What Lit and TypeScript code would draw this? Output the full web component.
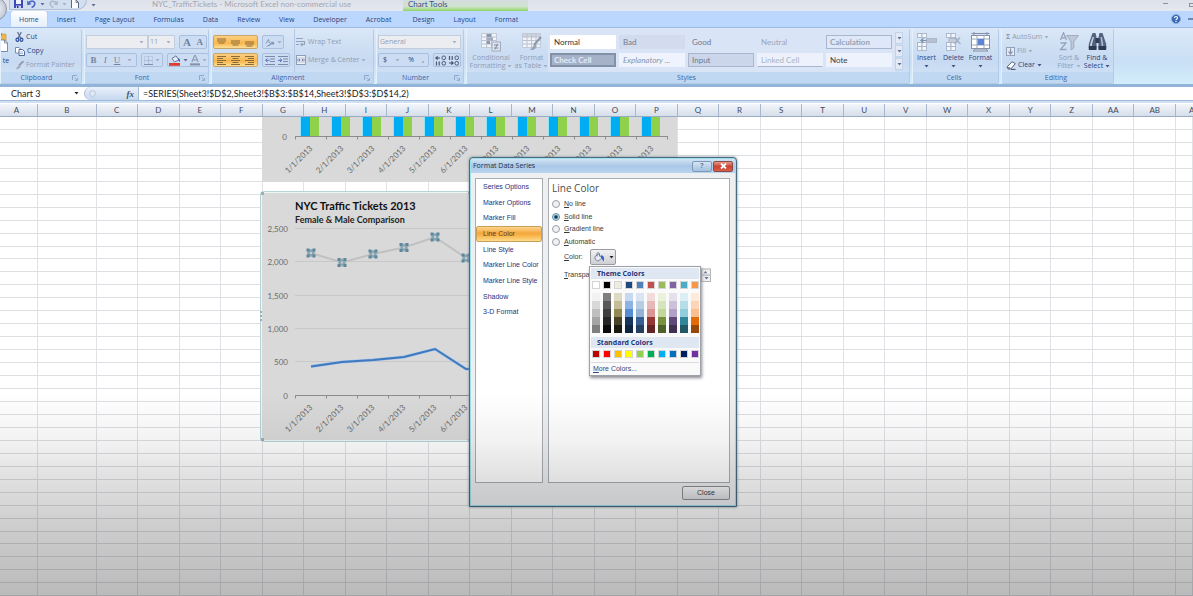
import { LitElement, html, css, svg, nothing } from "lit";
import { customElement, property, state } from "lit/decorators.js";
import { classMap } from "lit/directives/class-map.js";

const TABS = ["Home", "Insert", "Page Layout", "Formulas", "Data", "Review", "View", "Developer", "Acrobat"];
const CHART_TABS = ["Design", "Layout", "Format"];
const COLUMNS = [..."ABCDEFGHIJKLMNOPQRSTUVWXYZ", "AA", "AB", "AC"];
const ROW_COUNT = 37;
const MONTHS = Array.from({ length: 12 }, (_, i) => `${i + 1}/1/2013`);
const SECTIONS = ["Series Options", "Marker Options", "Marker Fill", "Line Color", "Line Style",
  "Marker Line Color", "Marker Line Style", "Shadow", "3-D Format"];
const THEME = ["#ffffff", "#000000", "#eeece1", "#1f497d", "#4f81bd", "#c0504d", "#9bbb59", "#8064a2", "#4bacc6", "#f79646"];
const SHADES = [
  ["#f2f2f2", "#d8d8d8", "#bfbfbf", "#a5a5a5", "#7f7f7f"],
  ["#7f7f7f", "#595959", "#3f3f3f", "#262626", "#0c0c0c"],
  ["#ddd9c3", "#c4bd97", "#938953", "#494429", "#1d1b10"],
  ["#c6d9f0", "#8db3e2", "#548dd4", "#17365d", "#0f243e"],
  ["#dbe5f1", "#b8cce4", "#95b3d7", "#366092", "#244061"],
  ["#f2dcdb", "#e5b9b7", "#d99694", "#953734", "#632423"],
  ["#ebf1dd", "#d7e3bc", "#c3d69b", "#76923c", "#4f6128"],
  ["#e5e0ec", "#ccc1d9", "#b2a2c7", "#5f497a", "#3f3151"],
  ["#dbeef3", "#b7dde8", "#92cddc", "#31859b", "#205867"],
  ["#fdeada", "#fbd5b5", "#fac08f", "#e36c09", "#974806"],
];
const STANDARD = ["#c00000", "#ff0000", "#ffc000", "#ffff00", "#92d050", "#00b050", "#00b0f0", "#0070c0", "#002060", "#7030a0"];

const icon = (w: number, h: number, body: unknown) =>
  html`<svg width=${w} height=${h} viewBox="0 0 ${w} ${h}" aria-hidden="true">${body}</svg>`;
const caret = (color = "#5b6f95") => icon(5, 3, svg`<path d="M0.5 0H4.5L2.5 2.6Z" fill=${color} />`);

const ICONS = {
  save: icon(9, 9, svg`<path d="M0 0H9V9H1.2L0 7.8Z" fill="#3b48b5"/><rect x="2" y="0" width="5" height="4" fill="#eef2ff"/><rect x="2" y="5.6" width="5" height="3.4" fill="#c9cff0"/><rect x="3" y="6" width="1.4" height="3" fill="#28308a"/>`),
  undo: icon(9, 9, svg`<path d="M1 3.6C4-.4 8.6 1 7.6 4.6C7.2 6.200 6 7 4.600 7.600" fill="none" stroke="#4c68c4" stroke-width="1.700"/><path d="M0 .6L.4 5.200L4.600 4.200Z" fill="#4c68c4"/>`),
  redo: icon(9, 9, svg`<path d="M8 3.6C5-.4.4 1 1.400 4.600C1.800 6.200 3 7 4.400 7.600" fill="none" stroke="#aab6cf" stroke-width="1.500"/><path d="M9 .6L8.600 5.200L4.400 4.200Z" fill="#aab6cf"/>`),
  page: icon(8, 9, svg`<path d="M.5 0V8.500H7.500V2.500L5 0" fill="#fff" stroke="#5f6a80"/><path d="M5 0V2.500H7.500" fill="none" stroke="#5f6a80" stroke-width=".8"/>`),
  paste: icon(8, 20, svg`<rect x="-6" y="1" width="11" height="15" rx="1" fill="#f2b548" stroke="#c98a2b" stroke-width=".6"/><rect x="-4" y="0" width="5" height="3" fill="#8c93a3"/><path d="M-3 7H3.500L6.500 10V18.500H-3Z" fill="#fff" stroke="#5d7299" stroke-width=".8"/><path d="M3.500 7V10H6.500" fill="none" stroke="#5d7299" stroke-width=".7"/>`),
  cut: icon(9, 10, svg`<path d="M2.600 0L5.800 6.500M6.300 0L3 6.500" stroke="#5f6c86" stroke-width="1.200"/><ellipse cx="2.400" cy="7.800" rx="1.400" ry="1.600" fill="none" stroke="#2f4c9c" stroke-width="1.200"/><ellipse cx="6.500" cy="7.800" rx="1.400" ry="1.600" fill="none" stroke="#2f4c9c" stroke-width="1.200"/>`),
  copy: icon(10, 9, svg`<path d="M.5.5H4L5.500 2V6H.5Z" fill="#fff" stroke="#6a80ad" stroke-width=".9"/><path d="M4 2.500H7.500L9.500 4.500V8.500H4Z" fill="#fff" stroke="#3b5692" stroke-width=".9"/><path d="M5 5H8M5 6.600H8.300" stroke="#7d95c6" stroke-width=".7"/>`),
  brush: icon(9, 9, svg`<path d="M8.500 0L4 4.500" stroke="#8e99ad" stroke-width="1.800"/><path d="M4.600 3.800L6 5.300C4.500 8 2.500 8.500.5 8.600C1.800 7.500 2 5 4.600 3.800Z" fill="#a6afbf"/>`),
  launcher: icon(6, 6, svg`<path d="M.5 5V.5H5" fill="none" stroke="#8fa8cc"/><path d="M2.500 2.500L5 5M5.500 2.800V5.500H2.800" fill="none" stroke="#8fa8cc" stroke-width=".9"/>`),
  borders: icon(9, 9, svg`<rect x=".5" y=".5" width="8" height="8" fill="none" stroke="#9fb0cb" stroke-width=".8" stroke-dasharray="1 1"/><path d="M4.500.5V8.500M.5 4.500H8.500" stroke="#9fb0cb" stroke-width=".7"/><path d="M0 8.500H9" stroke="#7f90ac"/>`),
  fill: icon(12, 11, svg`<path d="M3 3.500L7 .8L10 5L5.500 7Z" fill="#e5ecf8" stroke="#5b6e94" stroke-width=".9"/><path d="M9.400 3C11.200 4 11.300 6 10.600 7C9.800 6.500 10 5 9 4.200Z" fill="#3156b0"/><rect x="0" y="8" width="11" height="2.800" fill="#e23a2e"/>`),
  fontColor: icon(10, 11, svg`<path d="M1.800 7L4.600.6H5.400L8.200 7M2.900 4.800H7" fill="none" stroke="#8f9db8" stroke-width="1.200"/><rect x="0" y="8.300" width="10" height="2.200" fill="#8a94a8"/>`),
  orient: icon(10, 9, svg`<path d="M1 5.500L3.500 1.500L4.500 5M4.300 7.500L7 3.500M1.500 8.500L8.500 5M6.500 4.600L9 4.700L7.800 7" fill="none" stroke="#7b8cab" stroke-width=".9"/>`),
  wrap: icon(10, 10, svg`<path d="M0 1.500H7M0 4.500H8.500V7.500H5M0 7.500H3M6.500 5.800L4.800 7.500L6.500 9.200" fill="none" stroke="#94a3bd" stroke-width="1.100"/>`),
  merge: icon(10, 10, svg`<rect x=".5" y=".5" width="9" height="9" fill="#edf1f8" stroke="#8f9db8"/><path d="M.5 3H9.500M.5 7H9.500" stroke="#a9b6cd" stroke-width=".7"/><path d="M1 5H4M9 5H6M2.800 3.800L4.200 5L2.800 6.200M7.200 3.800L5.800 5L7.200 6.200" fill="none" stroke="#5e6f90" stroke-width=".8"/>`),
  conditional: icon(20, 20, svg`<rect x=".5" y="1.500" width="15" height="14" fill="#f1f3f8" stroke="#c3cad8"/><path d="M.5 5H15.500M.5 8.500H15.500M.5 12H15.500M5.500 1.500V15.500M10.500 1.500V15.500" stroke="#b9c2d3"/><rect x="6" y="2" width="4" height="3" fill="#8d97aa"/><rect x="6" y="5.500" width="6" height="3" fill="#a1aabb"/><rect x="6" y="9" width="3" height="3" fill="#8d97aa"/><rect x="11" y="10" width="8.500" height="9" fill="#dfe4ec" stroke="#9ba6ba" stroke-width=".9"/><path d="M13 13H17.500M13 16H17.500M16.600 11.800L14 17.300" stroke="#77839a" stroke-width=".9"/>`),
  formatTable: icon(20, 20, svg`<rect x=".5" y="1.500" width="18" height="14" fill="#f1f3f8" stroke="#c3cad8"/><rect x="1" y="2" width="17" height="3" fill="#cdd4e0"/><path d="M.5 5H18.500M.5 8.500H18.500M.5 12H18.500M5 1.500V15.500M9.500 1.500V15.500M14 1.500V15.500" stroke="#b9c2d3"/><path d="M19 5L12 13" stroke="#8b96ab" stroke-width="2"/><path d="M13.300 12.500C11 12.500 11 16 8 17.500C11 19 14.500 17 14.500 13.700Z" fill="#9aa5b9"/>`),
  insert: icon(20, 18, svg`<g fill="#f2f5fa" stroke="#a8b4c8" stroke-width=".9"><rect x=".5" y=".5" width="4.500" height="4"/><rect x="5" y=".5" width="4.500" height="4"/><rect x="9.500" y="5.500" width="10" height="4" fill="#b6c0d1"/><rect x=".5" y="9.500" width="4.500" height="4"/><rect x="5" y="9.500" width="4.500" height="4"/><rect x=".5" y="13.500" width="4.500" height="4"/><rect x="5" y="13.500" width="4.500" height="4"/></g><path d="M9.500 7.500H4M6.500 5.200L4 7.500L6.500 9.800" fill="none" stroke="#7f8ea9" stroke-width="1.200"/>`),
  remove: icon(18, 18, svg`<g fill="#f2f5fa" stroke="#a8b4c8" stroke-width=".9"><rect x="1.500" y=".5" width="4.500" height="4"/><rect x="6" y=".5" width="4.500" height="4"/><rect x="4" y="5.500" width="8" height="4" fill="#c4ccd9"/><rect x="1.500" y="9.500" width="4.500" height="4"/><rect x="6" y="9.500" width="4.500" height="4"/><rect x="1.500" y="13.500" width="4.500" height="4"/><rect x="6" y="13.500" width="4.500" height="4"/></g><path d="M9.500 4.500L15.500 11M15 4.500L9.500 11" stroke="#a3b0c6" stroke-width="1.400"/>`),
  format: icon(21, 20, svg`<rect x="1.500" y="3.500" width="18" height="13" fill="#fff" stroke="#8492ac"/><path d="M1.500 7H19.500M1.500 13H19.500M7 3.500V16.500M14 3.500V16.500" stroke="#9aa8c0"/><rect x="7.500" y="7" width="6.500" height="6" fill="#5b84d6"/><path d="M1.500 1.500H19.500M4 0V3M17 0V3M3 19H18L16 17H5Z" stroke="#8590a6" fill="#d7dde9"/>`),
  fillDown: icon(9, 9, svg`<rect x=".5" y=".5" width="8" height="8" fill="#e4e9f2" stroke="#93a0b7"/><path d="M4.500 1.500V6M2.500 4.500L4.500 7L6.500 4.500" fill="none" stroke="#8290aa" stroke-width="1.200"/>`),
  eraser: icon(10, 9, svg`<path d="M1 6L6 .8L9.300 2.600L4.800 8H2Z" fill="#fff" stroke="#4a5570" stroke-width=".9"/><path d="M1 6L4 6.300L4.800 8H2Z" fill="#707b92"/><path d="M5 8.400H9.500" stroke="#3f4860"/>`),
  sort: icon(20, 20, svg`<path d="M1.500 8L4.500.8L7.500 8M2.600 5.800H6.500M1.500 11H7L1.500 17.500H7.500" fill="none" stroke="#97a3ba" stroke-width="1.300"/><path d="M7.500 3.500H19.500L14.800 9.500V16L12 18V9.500Z" fill="#bfc8d7" stroke="#95a1b7" stroke-width=".8"/>`),
  find: icon(19, 19, svg`<path d="M4.500 1H7.500L8.500 5V16.500H.8V12Z" fill="#53627f"/><path d="M14.500 1H11.500L10.500 5V16.500H18.200V12Z" fill="#53627f"/><rect x="7.500" y="6" width="4" height="5" fill="#323d58"/><path d="M4.600 5L2.200 12V15H4V12L6 5Z" fill="#c8d3e8"/><path d="M12.500 5L13.500 12V15H15.200V12L14 5Z" fill="#aebbd5"/><path d="M.8 14H8.500V18H.8ZM10.500 14H18.200V18H10.500Z" fill="#2f3953"/>`),
  help: icon(10, 10, svg`<circle cx="5" cy="5" r="4.500" fill="#3767b5" stroke="#8ba9d8"/><path d="M3.500 4C3.500 2 6.700 2 6.500 4C6.400 5 5 5 5 6.200M5 7V8" fill="none" stroke="#fff" stroke-width="1.200"/>`),
  bucket: icon(12, 11, svg`<path d="M2 4.500L5.500 2L9 6L5 9.200L2 7Z" fill="#e8edf6" stroke="#6b7c9c" stroke-width=".9"/><path d="M4 4.500V1.500C4 .3 6.500.3 6.500 2V4.500" fill="none" stroke="#6b7c9c" stroke-width=".9"/><path d="M8 3.200C10.800 3.500 11.600 5.500 10.600 9.500C9.500 9 9.300 6.500 7.800 5Z" fill="#3c5fc0"/>`),
};

const alignIcon = (lengths: number[], top: number) =>
  icon(9, 9, lengths.map((n, i) => svg`<path d="M${(9 - n) / 2} ${top + i * 2}H${(9 + n) / 2}" stroke="#8b6b38" stroke-width="1"/>`));
const rowsIcon = (shift: number) =>
  icon(9, 9, [9, 6, 9, 6, 9].map((n, i) => svg`<path d="M${n === 9 ? 0 : shift} ${0.5 + i * 2}h${n}" stroke="#8b6b38" stroke-width="1"/>`));
const indentIcon = (dir: number) => icon(10, 9, svg`
  <path d="M0 .5H10M5 3H10M5 5.500H10M0 8.500H10" stroke="#7b8bab"/>
  <path d=${dir < 0 ? "M4.500 4.300H.8M2.500 2.500L.6 4.300L2.500 6.100" : "M0 4.300H3.700M2 2.500L3.900 4.300L2 6.100"} fill="none" stroke="#5672b4" />`);
const decimalIcon = (dir: number) => icon(12, 11, svg`
  <path d=${dir < 0 ? "M5 3H1M2.600 1.300L.8 3L2.600 4.700" : "M1 8H5M3.400 6.300L5.200 8L3.400 9.700"} fill="none" stroke="#3c4c74" stroke-width="1.100"/>
  <rect x="7" y="1" width="3.500" height="3.600" rx="1.500" fill="none" stroke="#4a5875"/>
  <rect x="7" y="6.500" width="3.500" height="3.600" rx="1.500" fill="none" stroke="#4a5875"/>
  <path d=${dir < 0 ? "M1.500 6.500V10.500M4.200 6.500V10.500" : "M1.500 1V5M4.200 1V5"} stroke="#4a5875" stroke-width="1.200"/>`);

@customElement("ribbon-group")
class RibbonGroup extends LitElement {
  @property() label = "";
  @property({ type: Boolean }) launcher = false;
  static styles = css`
    :host { display: flex; flex-direction: column; box-sizing: border-box; border: 1px solid #b3cbe8; border-left-color: #e6f0fc; border-top: 0;
      border-radius: 2px; background: linear-gradient(#dae7f7, #cfe0f4 30%, #c7daf1 60%, #d3e5f8); overflow: hidden; flex: none; }
    .content { display: flex; flex: 1; min-height: 0; }
    .label { display: flex; align-items: center; height: 11px; flex: none; background: #c0d8f1; color: #4066ab; line-height: 10px; padding-right: 3px; }
    .name { flex: 1; text-align: center; }
    svg { display: block; }
  `;
  render() {
    return html`<div class="content"><slot></slot></div>
      <div class="label"><span class="name">${this.label}</span>${this.launcher ? ICONS.launcher : nothing}</div>`;
  }
}

@customElement("excel-ribbon")
class ExcelRibbon extends LitElement {
  static styles = css`
    :host { display: block; flex: none; }
    svg { display: block; flex: none; }
    button, select { font: inherit; color: inherit; border: 0; background: none; padding: 0; margin: 0; white-space: nowrap; }
    select { appearance: none; }
    .title { display: flex; height: 11px; background: linear-gradient(#dde1ea, #e6e8ef); color: #a3a7b2; font-family: Lato, sans-serif; font-size: 8px; line-height: 8px; }
    .quick { display: flex; align-items: flex-start; gap: 4px; width: 78px; box-sizing: border-box; padding-left: 4px; margin-left: 9px; height: 10px; background: #d2dff0;
      border: 1px solid #aebfd8; border-top: 0; border-radius: 0 0 10px 0; }
    .quick button { height: 8px; overflow: hidden; flex: none; }
    .more { padding: 0 4px; display: flex; align-items: center; }
    .name { margin-left: 52px; width: 251px; white-space: nowrap; }
    .tools { width: 125px; box-sizing: border-box; padding-left: 5px; color: #34508f; background: linear-gradient(#d5dbe0, #cfe3cc 60%, #8fd564); }
    .window { margin-left: auto; display: flex; gap: 21px; padding-top: 3px; }
    .window span { width: 5px; height: 1px; background: #8c909b; }
    .window span + span { width: 4px; height: 4px; background: none; border: 1px solid #8c909b; border-right: 0; box-sizing: border-box; }
    .tabs { display: flex; gap: 1px; height: 16px; background: #bbd7fd; color: #2a4480; padding-left: 11px; position: relative; }
    .tabs button { padding: 1px 9px 0; line-height: 16px; height: 16px; }
    .tabs .active { background: linear-gradient(#fff, #e4eefb); border-radius: 3px 3px 0 0; box-shadow: 0 0 1px #7fa2d4; padding: 1px 8px 0; }
    .tabs .design { margin-left: 2px; }
    .right { margin-left: auto; display: flex; align-items: center; gap: 7px; }
    .dash { width: 5px; height: 2px; background: #6d86b4; }
    .orb { position: absolute; left: -17px; top: -14px; width: 22px; height: 22px; border-radius: 50%; border: 1px solid #8c97a8;
      background: radial-gradient(#f8f9fc, #c3cad8 70%, #e9edf4); }
    .body { display: flex; gap: 2px; height: 60px; box-sizing: border-box; padding: 1px 0 0; border-top: 1px solid #9dbbe2;
      border-bottom: 3px solid #91b4d8; background: linear-gradient(#dce9f8, #c9dff5 60%, #d2effb); color: #2a4480; }
    .off { color: #919cb2; }
    .clipboard { width: 82px; } .font { width: 125px; } .align { width: 163px; } .number { width: 88px; }
    .styles { width: 444px; } .cells { width: 87px; } .editing { width: 113px; }
    .paste { width: 10px; overflow: hidden; display: flex; flex-direction: column; padding-top: 4px; gap: 3px; }
    .list { display: flex; flex-direction: column; padding: 1px 0 0 4px; }
    .list button { display: flex; align-items: center; gap: 2px; height: 14px; }
    .rows { display: flex; flex-direction: column; gap: 4px; padding: 6px 0 0 1px; }
    .row { display: flex; gap: 4px; height: 14px; }
    .set { display: flex; align-items: center; justify-content: space-around; box-sizing: border-box; border: 1px solid #a9bfdf; border-radius: 2px; background: #ccdcf2; }
    .set button { display: flex; align-items: center; gap: 2px; }
    .box { display: flex; align-items: center; box-sizing: border-box; border: 1px solid #c2cede; background: #ebedf1; padding-right: 3px; }
    .box select { flex: 1; min-width: 0; padding-left: 1px; }
    .w20 { width: 22px; } .w26 { width: 27px; } .w28 { width: 28px; } .w42 { width: 42px; } .w50 { width: 51px; } .w62 { width: 62px; } .w82 { width: 83px; }
    .join { margin-left: -4px; }
    .big { font-size: 11px; font-family: "Liberation Serif", serif; font-weight: bold; color: #6f819f; line-height: 12px; }
    .small { font-size: 9px; }
    .serif { font-family: "Liberation Serif", serif; font-size: 9px; color: #75849f; }
    .orange { width: 45px; background: linear-gradient(#fbcf83, #f9b64c 60%, #fddf96); border-color: #c9a469; }
    .wide { display: flex; flex-direction: column; gap: 4px; padding: 6px 0 0 1px; margin-left: 4px; border-left: 1px solid #b3c8e4; }
    .wide button { display: flex; align-items: center; gap: 2px; height: 14px; }
    .tall { display: flex; flex-direction: column; align-items: center; padding-top: 2px; line-height: 8px; gap: 2px; height: 43px; }
    .line { display: flex; align-items: center; gap: 2px; height: 8px; justify-content: center; }
    .caption { display: flex; flex-direction: column; align-items: center; }
    .tall .pic { height: 21px; display: flex; align-items: center; }
    .t1 { width: 48px; } .t2 { width: 33px; }
    .gallery { display: grid; grid-template-columns: repeat(5, 66px); grid-auto-rows: 14px; gap: 4px 3px; padding: 6px 3px 4px 2px; background: #dae4f7; }
    .gallery button { box-sizing: border-box; text-align: left; padding-left: 3px; font-family: Lato, sans-serif; font-size: 8px; border: 1px solid transparent; color: #707a8e; }
    .gallery .normal { background: #fff; color: #333; }
    .gallery .check { background: #a5b2c8; border: 2px solid #8391a8; color: #e6ecf7; font-weight: bold; line-height: 9px; padding-left: 2px; }
    .gallery .expl { background: #eef3fd; font-style: italic; color: #8d96a8; }
    .gallery .bad { background: #d3dcee; }
    .gallery .input { background: #cbd6ea; border-color: #a9b6cd; }
    .gallery .neutral { color: #9aa4b8; }
    .gallery .calc { border-color: #aab6cd; background: #dee8f8; color: #98a2b5; font-weight: bold; }
    .gallery .linked { background: #ecf1fb; border-bottom-color: #aab6cd; color: #aab3c4; }
    .gallery .note { background: #edf2fc; color: #3c3f48; }
    .scroll { display: grid; grid-template-rows: repeat(3, 12px); padding-top: 3px; gap: 1px; }
    .scroll button { width: 8px; background: #e3eaf5; border: 1px solid #c3d2e8; box-sizing: border-box; display: flex; align-items: center; justify-content: center; }
    .cells .tall { width: 27px; }
    .editing .tall { width: 28px; }
    .editing .list { width: 49px; }
  `;

  private tall(pic: unknown, lines: string[], cls: string, arrow: "last" | "below", off = false) {
    return html`<button class="tall ${cls} ${off ? "off" : ""}"><span class="pic">${pic}</span><span class="caption">
      ${lines.map((t, i) => html`<span class="line">${t}${arrow === "last" && i === lines.length - 1 ? caret(off ? "#a4afc4" : "#3d5487") : nothing}</span>`)}
      ${arrow === "below" ? html`<span class="line">${caret("#3d5487")}</span>` : nothing}</span></button>`;
  }

  render() {
    const styles: [string, string][] = [["Normal", "normal"], ["Bad", "bad"], ["Good", "good"], ["Neutral", "neutral"], ["Calculation", "calc"],
      ["Check Cell", "check"], ["Explanatory ...", "expl"], ["Input", "input"], ["Linked Cell", "linked"], ["Note", "note"]];
    const faint = caret("#a4afc4");
    return html`
      <div class="title">
        <div class="quick">
          <button aria-label="Save">${ICONS.save}</button><button aria-label="Undo">${ICONS.undo}</button><button class="drop" aria-label="Undo list">${caret()}</button>
          <button aria-label="Redo">${ICONS.redo}</button><button class="drop" aria-label="Redo list">${faint}</button><button aria-label="New">${ICONS.page}</button>
        </div>
        <button class="more" aria-label="Customize">${caret()}</button>
        <span class="name">NYC_TrafficTickets - Microsoft Excel non-commercial use</span>
        <span class="tools">Chart Tools</span>
        <span class="window"><span></span><span></span></span>
      </div>
      <div class="tabs">
        <span class="orb"></span>
        ${TABS.map((t) => html`<button class=${classMap({ active: t === "Home" })}>${t}</button>`)}
        ${CHART_TABS.map((t) => html`<button class=${classMap({ design: t === "Design" })}>${t}</button>`)}
        <span class="right">${ICONS.help}<span class="dash"></span></span>
      </div>
      <div class="body">
        <ribbon-group class="clipboard" label="Clipboard" launcher>
          <button class="paste">${ICONS.paste}<span>te</span></button>
          <div class="list"><button>${ICONS.cut}Cut</button><button>${ICONS.copy}Copy</button><button class="off">${ICONS.brush}Format Painter</button></div>
        </ribbon-group>
        <ribbon-group class="font" label="Font" launcher>
          <div class="rows off">
            <div class="row">
              <div class="box w62"><select aria-label="Font name"><option></option></select>${faint}</div>
              <div class="box w26 join"><select aria-label="Font size"><option>11</option></select>${faint}</div>
              <div class="set w28"><button class="big">A</button><button class="big small">A</button></div>
            </div>
            <div class="row">
              <div class="set w50"><button class="serif"><b>B</b></button><button class="serif"><i>I</i></button><button class="serif"><u>U</u></button>${faint}</div>
              <div class="set w20"><button aria-label="Borders">${ICONS.borders}${faint}</button></div>
              <div class="set w42"><button aria-label="Fill color">${ICONS.fill}${caret()}</button><button aria-label="Font color">${ICONS.fontColor}${faint}</button></div>
            </div>
          </div>
        </ribbon-group>
        <ribbon-group class="align" label="Alignment" launcher>
          <div class="rows">
            <div class="row">
              <div class="set orange"><button aria-label="Top">${alignIcon([9, 9, 6], 1)}</button><button aria-label="Middle">${alignIcon([9, 9, 6], 3)}</button><button aria-label="Bottom">${alignIcon([9, 9, 6], 4)}</button></div>
              <div class="set w20"><button aria-label="Orientation">${ICONS.orient}${faint}</button></div>
            </div>
            <div class="row">
              <div class="set orange"><button aria-label="Left">${rowsIcon(0)}</button><button aria-label="Center">${rowsIcon(1.5)}</button><button aria-label="Right">${rowsIcon(3)}</button></div>
              <div class="set w28"><button aria-label="Outdent">${indentIcon(-1)}</button><button aria-label="Indent">${indentIcon(1)}</button></div>
            </div>
          </div>
          <div class="wide off"><button>${ICONS.wrap}Wrap Text</button><button>${ICONS.merge}Merge &amp; Center${faint}</button></div>
        </ribbon-group>
        <ribbon-group class="number" label="Number" launcher>
          <div class="rows">
            <div class="row off"><div class="box w82"><select aria-label="Number format"><option>General</option></select>${faint}</div></div>
            <div class="row">
              <div class="set w50"><button>$</button>${faint}<button>%</button><button>,</button></div>
              <div class="set w28"><button aria-label="Increase decimal">${decimalIcon(-1)}</button><button aria-label="Decrease decimal">${decimalIcon(1)}</button></div>
            </div>
          </div>
        </ribbon-group>
        <ribbon-group class="styles" label="Styles">
          ${this.tall(ICONS.conditional, ["Conditional", "Formatting"], "t1", "last", true)}
          ${this.tall(ICONS.formatTable, ["Format", "as Table"], "t2", "last", true)}
          <div class="gallery">${styles.map(([t, c]) => html`<button class=${c}>${t}</button>`)}</div>
          <div class="scroll"><button aria-label="Up">${caret()}</button><button aria-label="Down">${caret()}</button><button aria-label="More">${caret()}</button></div>
        </ribbon-group>
        <ribbon-group class="cells" label="Cells">
          ${this.tall(ICONS.insert, ["Insert"], "", "below")}${this.tall(ICONS.remove, ["Delete"], "", "below")}${this.tall(ICONS.format, ["Format"], "", "below")}
        </ribbon-group>
        <ribbon-group class="editing" label="Editing">
          <div class="list"><button class="off"><b>Σ</b> AutoSum${faint}</button><button class="off">${ICONS.fillDown}Fill${faint}</button><button>${ICONS.eraser}Clear${caret("#3d5487")}</button></div>
          ${this.tall(ICONS.sort, ["Sort &", "Filter"], "", "last", true)}${this.tall(ICONS.find, ["Find &", "Select"], "", "last")}
        </ribbon-group>
      </div>`;
  }
}

@customElement("ticket-charts")
class TicketCharts extends LitElement {
  static styles = css`
    :host { display: block; position: absolute; left: 260px; top: 0; }
    svg { display: block; font-family: Lato, sans-serif; font-size: 8px; fill: #6a6a6a; }
    .title { font-size: 11px; font-weight: bold; fill: #111; }
    .sub { font-size: 9px; font-weight: bold; fill: #222; }
  `;
  private dates(y: number) {
    return MONTHS.map((m, i) => svg`<text text-anchor="end" transform="translate(${53 + i * 31} ${y}) rotate(-45)">${m}</text>`);
  }
  private axis(y: number) {
    const ticks = Array.from({ length: 13 }, (_, i) => `M${35.5 + i * 31} ${y}v3`).join("");
    return svg`<path d="M35 ${y}H408${ticks}" stroke="#8c8c8c" fill="none" />`;
  }
  render() {
    const male = [137, 146.5, 138, 131.5, 121, 142, 146, 140, 138, 142, 146, 148];
    const female = [250.5, 246, 244, 241, 233, 253, 253, 250, 248, 250, 252, 254];
    const line = (v: number[]) => v.map((y, i) => `${51 + i * 31},${y}`).join(" ");
    return html`<svg width="418" height="326" viewBox="0 1 418 326" role="img" aria-label="NYC traffic ticket charts">
      <rect x="2" y="0" width="415" height="66" fill="#d9d9d9" />
      ${MONTHS.map((_, i) => svg`<rect x=${40 + i * 31} y="0" width="1" height="20" fill="#8fe3f6"/><rect x=${41 + i * 31} y="0" width="9" height="20" fill="#00adf2"/>
        <rect x=${50 + i * 31} y="0" width="9" height="20" fill="#8fd14b"/>`)}
      <text x="27" y="24" text-anchor="end">0</text>
      ${this.axis(20.5)} ${this.dates(33)}
      <rect x=".5" y="75.500" width="417" height="250" rx="3" fill="#eef5f6" stroke="#b4d4d8" />
      <rect x="2" y="77" width="414" height="247" rx="4" fill="#d9d9d9" />
      <g fill="#9ab0b5"><path d="M1 76h3v3h-3zM1 322h3v3h-3zM208 76h4v2h-4zM208 323h4v2h-4zM0 195h2v2h-2zM0 199h2v2h-2zM0 203h2v2h-2z" /></g>
      <text class="title" x="35" y="94">NYC Traffic Tickets 2013</text>
      <text class="sub" x="35" y="107">Female &amp; Male Comparison</text>
      ${["2,500", "2,000", "1,500", "1,000", "500", "0"].map((t, i) => svg`<text x="28" y=${116 + Math.round(i * 33.3)} text-anchor="end">${t}</text>
        ${i < 5 ? svg`<path d="M35 ${112.5 + Math.round(i * 33.3)}H408" stroke="#c8c8c8"/>` : nothing}`)}
      ${this.axis(279.5)} ${this.dates(292)}
      <polyline points=${line(male)} fill="none" stroke="#c0c0c0" stroke-width="2" />
      ${male.map((y, i) => svg`<g transform="translate(${51 + i * 31} ${y})"><rect x="-3.500" y="-3.500" width="7" height="7" fill="#8aa5b3" stroke="#9db6c2"/>
        <path d="M-4.500-4.500h3v3h-3zM1.500-4.500h3v3h-3zM-4.500 1.500h3v3h-3zM1.500 1.500h3v3h-3z" fill="#5f8799"/><path d="M-1-1h2v2h-2z" fill="#c5ced2"/></g>`)}
      <polyline points=${line(female)} fill="none" stroke="#9cc3f0" stroke-width="3" />
      <polyline points=${line(female)} fill="none" stroke="#4179bd" stroke-width="2" />
    </svg>`;
  }
}

@customElement("format-dialog")
class FormatDialog extends LitElement {
  @state() private fill = "Solid line";
  static styles = css`
    :host { display: flex; flex-direction: column; position: absolute; left: 469px; top: 157px; width: 268px; height: 350px; box-sizing: border-box;
      border: 1px solid #476b80; border-radius: 4px 4px 0 0; background: #eeeff1; box-shadow: inset 0 0 0 1px #9fe0ee, 0 0 3px #7f8890; padding: 1px; color: #3a3a3a;
      font-family: "Liberation Sans", sans-serif; }
    button, input { font: inherit; color: inherit; margin: 0; }
    svg { display: block; flex: none; }
    .bar { display: flex; align-items: center; height: 14px; flex: none; padding: 0 1px 0 2px; background: linear-gradient(#d2e3f3, #a9c8e6 50%, #b9d4ee); color: #22304a; border-radius: 3px 3px 0 0; font-family: "Open Sans", sans-serif; }
    .bar h1 { margin: 0; font: inherit; flex: 1; }
    .bar button { width: 20px; height: 11px; border: 1px solid #7f9ab8; border-radius: 2px; padding: 0; line-height: 8px; margin-right: 1px;
      background: linear-gradient(#d5e4f4, #a4c1de); color: #6c7c92; font-weight: bold; display: flex; align-items: center; justify-content: center; }
    .bar .close { background: linear-gradient(#e79a8c, #cb4330 50%, #d9604a); border-color: #8a4a45; color: #fff; }
    .main { display: flex; gap: 5px; flex: 1; padding: 5px 5px 0 4px; min-height: 0; }
    .nav, .panel { box-sizing: border-box; border: 1px solid #a9adb2; background: #fff; }
    .nav { width: 68px; }
    .items { display: flex; flex-direction: column; height: 141px; }
    .items button { flex: 1; min-height: 0; border: 1px solid transparent; background: none; text-align: left; padding: 0 0 0 6px; color: #26327e; line-height: 12px; white-space: nowrap; }
    .items .on { background: linear-gradient(#fcd58d, #f6a73b 45%, #f9b348 60%, #fedc8b); border-color: #c8a05a; color: #5b3d33; border-radius: 2px; }
    .panel { flex: 1; padding: 2px 4px 0 3px; }
    h2 { margin: 0; font-family: "Open Sans", sans-serif; font-weight: normal; font-size: 10px; line-height: 15px; color: #4c4c4c; height: 17px; }
    .opt { display: flex; align-items: center; gap: 4px; }
    .opts { display: grid; grid-template-rows: repeat(4, 1fr); height: 50px; border: 0; margin: 0; padding: 0; }
    .opt input { appearance: none; width: 8px; height: 8px; border: 1px solid #9a9ea5; border-radius: 50%; background: #f0f1f3; }
    .opt input:checked { background: radial-gradient(#17364f 20%, #4f9cc4 45%, #e3eef4 65%); border-color: #6b8798; }
    .under::first-letter { text-decoration: underline; }
    .under { display: inline-block; }
    .field { display: flex; align-items: center; height: 18px; padding-left: 12px; }
    .field > .under { width: 26px; }
    .wrap { position: relative; }
    .pick { display: flex; align-items: center; justify-content: center; gap: 4px; width: 26px; height: 16px; padding: 0; border: 1px solid #9a9ca2; border-radius: 2px; background: linear-gradient(#f1f1f2, #cfd0d3); }
    .menu { position: absolute; left: -1px; top: 17px; width: 112px; box-sizing: border-box; border: 1px solid #9da1a8; background: #fafafa; box-shadow: 1px 2px 3px #8b8d91; padding: 1px; z-index: 1; }
    .menu h3 { margin: 0; font-family: "Open Sans", sans-serif; font-size: 7px; line-height: 11px; padding-left: 6px; background: #dfe8f2; color: #1f3379; }
    .swatches { display: grid; grid-template-columns: repeat(10, 8px); column-gap: 3px; padding: 2px 0 4px 1px; }
    .swatches button { height: 8px; padding: 0; border: 1px solid #d4d4d4; background: var(--c); }
    .ramp { display: grid; grid-template-columns: repeat(10, 8px); column-gap: 3px; padding: 0 0 4px 1px; }
    .ramp div { display: grid; grid-template-rows: repeat(5, 8px); }
    .ramp button { border: 0; padding: 0; background: var(--c); }
    .more { display: block; border: 0; border-top: 1px solid #dcdcdc; background: none; padding: 0 0 0 2px; line-height: 10px; height: 12px; color: #3a4679; width: 100%; text-align: left; white-space: nowrap; }
    .trans { display: flex; align-items: center; height: 18px; padding-left: 12px; }
    .trans label { flex: 1; }
    .trans input { width: 26px; box-sizing: border-box; height: 13px; border: 1px solid #b1b4b9; padding: 0 2px; }
    .spin { display: grid; width: 10px; height: 13px; margin-right: 14px; }
    .spin button { border: 1px solid #b1b4b9; background: #f0f0f1; padding: 0; display: flex; align-items: center; justify-content: center; }
    .flip { transform: rotate(180deg); }
    .foot { display: flex; justify-content: flex-end; padding: 3px 5px 5px; flex: none; }
    .foot button { width: 48px; height: 14px; border: 1px solid #8b8f95; border-radius: 2px; background: linear-gradient(#f8f8f9, #dcdee1); padding: 0; line-height: 10px; }
  `;
  render() {
    const swatch = (c: string) => html`<button aria-label=${c} style="--c:${c}"></button>`;
    return html`
      <div class="bar"><h1>Format Data Series</h1><button>?</button>
        <button class="close" aria-label="Close window">${icon(7, 6, svg`<path d="M1 .5L6 5.500M6 .5L1 5.500" stroke="#fff" stroke-width="1.800"/>`)}</button></div>
      <div class="main">
        <nav class="nav"><div class="items">${SECTIONS.map((s) => html`<button class=${classMap({ on: s === "Line Color" })}>${s}</button>`)}</div></nav>
        <section class="panel">
          <h2>Line Color</h2>
          <fieldset class="opts" aria-label="Line">
            ${["No line", "Solid line", "Gradient line", "Automatic"].map((t) => html`<label class="opt">
              <input type="radio" name="line" .checked=${this.fill === t} @change=${() => (this.fill = t)} /><span class="under">${t}</span></label>`)}
          </fieldset>
          <div class="field"><span class="under">Color:</span>
            <div class="wrap">
              <button class="pick" aria-label="Color">${ICONS.bucket}${caret("#222")}</button>
              <div class="menu">
                <h3>Theme Colors</h3>
                <div class="swatches">${THEME.map(swatch)}</div>
                <div class="ramp">${SHADES.map((col) => html`<div>${col.map(swatch)}</div>`)}</div>
                <h3>Standard Colors</h3>
                <div class="swatches">${STANDARD.map(swatch)}</div>
                <button class="more"><span class="under">More Colors...</span></button>
              </div>
            </div>
          </div>
          <div class="trans"><label for="t" class="under">Transparency:</label><input id="t" />
            <span class="spin"><button aria-label="More" class="flip">${caret()}</button><button aria-label="Less">${caret()}</button></span></div>
        </section>
      </div>
      <div class="foot"><button>Close</button></div>`;
  }
}

@customElement("app-root")
class AppRoot extends LitElement {
  static styles = css`
    :host { display: flex; flex-direction: column; height: 100vh; position: relative; overflow: hidden; background: #fff;
      font-family: "Open Sans", "Noto Sans", sans-serif; font-size: 7px; line-height: 10px; }
    svg { display: block; flex: none; }
    input { font: inherit; color: #222; border: 0; padding: 0; background: #fff; min-width: 0; }
    .formula { display: flex; height: 13px; flex: none; border-bottom: 1px solid #9fbbd9; box-shadow: 0 2px 0 #cfe0f2; margin-bottom: 3px; font-family: Lato, sans-serif; font-size: 9px; }
    .ref { width: 74px; padding-left: 11px; box-sizing: border-box; }
    .drop { display: flex; align-items: center; width: 10px; }
    .fx { display: flex; align-items: center; justify-content: space-between; width: 55px; box-sizing: border-box; padding: 0 4px; border: 1px solid #a7bcd8; border-width: 0 1px;
      border-radius: 7px 0 0 7px; background: linear-gradient(#eaf1fb, #c6d8ee); margin-right: 4px; font: italic bold 9px "Liberation Serif", serif; color: #45526e; }
    .dot { width: 7px; height: 7px; border-radius: 50%; background: #dfe7f2; border: 1px solid #b9c7dc; box-sizing: border-box; }
    .expr { flex: 1; }
    .heads, .cols { display: grid; grid-template-columns: 76fr 117fr repeat(26, 83fr) 34fr; }
    .heads { height: 13px; flex: none; background: linear-gradient(#f3f6fb, #d6deea); border-bottom: 1px solid #9aabc4; box-sizing: border-box; color: #3f4a5c; font-family: Lato, sans-serif; font-size: 8px; }
    .heads span { border-right: 1px solid #a9b7cc; text-align: center; line-height: 13px; min-width: 0; overflow: hidden; box-sizing: border-box; }
    .heads span:first-child { padding-right: 4px; }
    .heads span:last-child { text-align: left; padding-left: 13px; border: 0; }
    .sheet { position: relative; flex: 1; min-height: 0; display: grid; }
    .cols, .lines { grid-area: 1 / 1; min-height: 0; }
    .cols span { border-right: 1px solid #e0e2e6; min-width: 0; }
    .lines { display: flex; flex-direction: column; }
    .lines span { flex: 1; border-bottom: 1px solid #dddfe3; min-height: 0; box-sizing: border-box; }
    .shade { position: absolute; inset: 0; pointer-events: none; z-index: 5;
      background: linear-gradient(transparent 66%, rgba(0,0,0,.05) 74%, rgba(0,0,0,.13) 81%, rgba(0,0,0,.2) 89%, rgba(0,0,0,.27)); }
  `;
  render() {
    return html`
      <excel-ribbon></excel-ribbon>
      <div class="formula">
        <input class="ref" aria-label="Name box" value="Chart 3" /><span class="drop">${caret("#222")}</span>
        <span class="fx"><span class="dot"></span><span>fx</span></span>
        <input class="expr" aria-label="Formula" value="=SERIES(Sheet3!$D$2,Sheet3!$B$3:$B$14,Sheet3!$D$3:$D$14,2)" />
      </div>
      <div class="heads">${COLUMNS.map((c) => html`<span>${c}</span>`)}</div>
      <div class="sheet">
        <div class="cols">${COLUMNS.map(() => html`<span></span>`)}</div>
        <div class="lines">${Array.from({ length: ROW_COUNT }, () => html`<span></span>`)}</div>
        <ticket-charts></ticket-charts>
      </div>
      <format-dialog></format-dialog>
      <div class="shade"></div>`;
  }
}
